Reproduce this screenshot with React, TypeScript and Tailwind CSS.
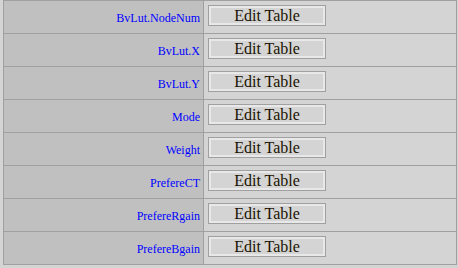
const rows = [
  "BvLut.NodeNum",
  "BvLut.X",
  "BvLut.Y",
  "Mode",
  "Weight",
  "PrefereCT",
  "PrefereRgain",
  "PrefereBgain",
];

export default function App() {
  return (
    <div className="h-[268px] w-[458px] bg-[#d4d4d4] pl-[3px] font-['Liberation_Serif',serif]">
      <div className="w-[454px] border border-[#a0a0a0]">
        {rows.map((name, i) => (
          <div
            key={name}
            className={`grid grid-cols-[200px_1fr] ${i > 0 ? "h-[33px] border-t border-[#a0a0a0]" : "h-[32px]"}`}
          >
            <div className="flex items-center justify-end border-r border-[#a0a0a0] bg-[#c0c0c0] pr-[3px] pt-[1px] text-[12px] text-[#0000ff]">
              {name}
            </div>
            <div className="flex items-start bg-[#d4d4d4] pl-[4px] pt-[4px]">
              <button className="h-[21px] w-[118px] border border-[#a0a0a0] bg-[#d4d4d4] pt-[1px] text-[16px] leading-none text-[#1a1200] shadow-[inset_1px_1px_0_#e8e8e8,inset_-1px_-1px_0_#e8e8e8,inset_2px_2px_0_#e8e8e8,inset_-2px_-2px_0_#e8e8e8]">
                Edit Table
              </button>
            </div>
          </div>
        ))}
      </div>
    </div>
  );
}
